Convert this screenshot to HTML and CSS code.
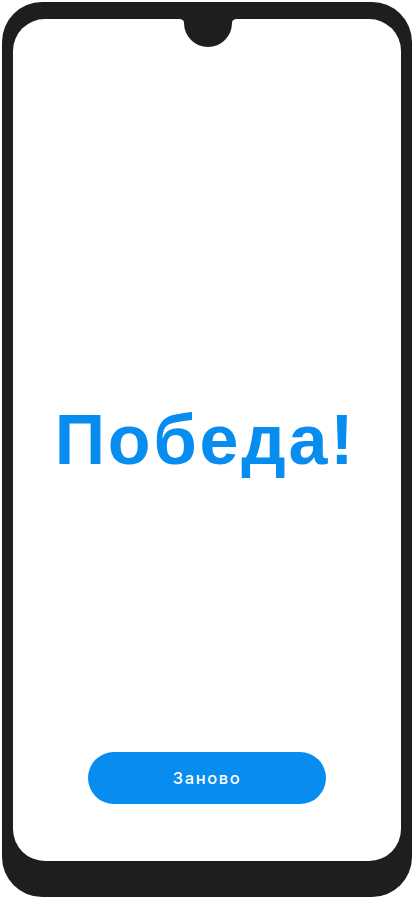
FILE: index.html
```html
<!DOCTYPE html>
<html lang="ru">
<head>
<meta charset="utf-8">
<title>Победа</title>
<link rel="stylesheet" href="styles.css">
</head>
<body>
<div class="phone">
  <div class="screen">
    <svg class="notch" width="60" height="30" viewBox="0 0 60 30" aria-hidden="true">
      <path d="M0 0 H60 C56 0 54 1 54 4 A24 24 0 0 1 6 4 C6 1 4 0 0 0 Z" fill="#1e1e1e"/>
    </svg>
    <div class="content">
      <h1 class="title">Победа!</h1>
    </div>
    <button class="btn" type="button">Заново</button>
  </div>
</div>
</body>
</html>
```
FILE: styles.css
```css
html, body {
  margin: 0;
  padding: 0;
  background: #ffffff;
}
body {
  padding: 2px;
  font-family: "Liberation Sans", Arial, sans-serif;
}
.phone {
  width: 410px;
  height: 895px;
  box-sizing: border-box;
  background: #1e1e1e;
  border-radius: 40px;
  padding: 17px 11px 36px 11px;
}
.screen {
  position: relative;
  height: 100%;
  background: #ffffff;
  border-radius: 32px;
  display: flex;
  flex-direction: column;
  align-items: center;
  padding: 109px 0 57px;
  box-sizing: border-box;
}
.notch {
  position: absolute;
  top: 0;
  left: 165px;
  display: block;
}
.content {
  flex: 1;
  display: flex;
  align-items: center;
  justify-content: center;
}
.title {
  margin: 0 3px 0 0;
  color: #078cf0;
  font-size: 70px;
  font-weight: 700;
  letter-spacing: 2.8px;
  line-height: 1;
}
.btn {
  width: 238px;
  height: 52px;
  border: none;
  border-radius: 26px;
  background: #078cf0;
  color: #ffffff;
  font-family: Inter, "Liberation Sans", Arial, sans-serif;
  font-size: 16.5px;
  font-weight: 500;
  letter-spacing: 1.6px;
  padding: 0;
}
```
